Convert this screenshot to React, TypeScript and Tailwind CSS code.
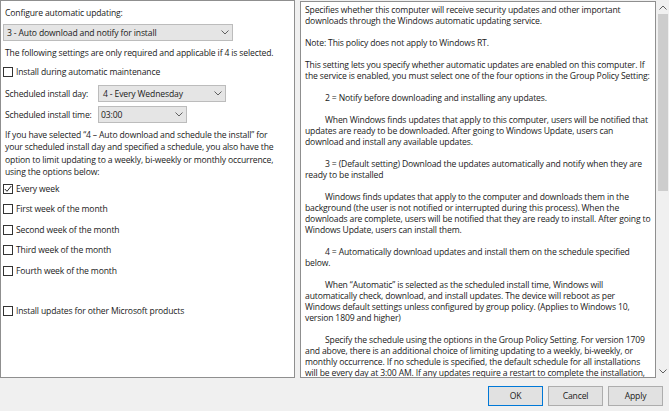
import React from "react";

const Chevron = ({ up = false }: { up?: boolean }) => (
  <svg width="8" height="5" viewBox="0 0 8 5" className="block">
    <polyline
      points={up ? "0.5,4.5 4,1 7.5,4.5" : "0.5,0.5 4,4 7.5,0.5"}
      fill="none"
      stroke="#606060"
      strokeWidth="1"
    />
  </svg>
);

const Box = ({ checked = false }: { checked?: boolean }) => (
  <div className="w-[10px] h-[10px] shrink-0 border border-[#333333] bg-white flex items-center justify-center">
    {checked && (
      <svg width="8" height="8" viewBox="0 0 8 8">
        <polyline points="0.8,4 3,6.3 7.3,1" fill="none" stroke="#222" strokeWidth="1" />
      </svg>
    )}
  </div>
);

const Check = ({ checked = false, label }: { checked?: boolean; label: string }) => (
  <div className="flex items-center h-[20.5px]">
    <Box checked={checked} />
    <span className="ml-[3px]">{label}</span>
  </div>
);

const Combo = ({ text, w, textPad, chevRight }: { text: string; w: string; textPad: string; chevRight: string }) => (
  <div className={`${w} h-[17px] bg-[#e5e5e5] border border-[#bcbcbc] flex items-center justify-between`}>
    <span className={textPad}>{text}</span>
    <span className={chevRight}>
      <Chevron />
    </span>
  </div>
);

const rightLines: { t: string; indent?: boolean }[] = [
  { t: "Specifies whether this computer will receive security updates and other important" },
  { t: "downloads through the Windows automatic updating service." },
  { t: "" },
  { t: "Note: This policy does not apply to Windows RT." },
  { t: "" },
  { t: "This setting lets you specify whether automatic updates are enabled on this computer. If" },
  { t: "the service is enabled, you must select one of the four options in the Group Policy Setting:" },
  { t: "" },
  { t: "2 = Notify before downloading and installing any updates.", indent: true },
  { t: "" },
  { t: "When Windows finds updates that apply to this computer, users will be notified that", indent: true },
  { t: "updates are ready to be downloaded. After going to Windows Update, users can" },
  { t: "download and install any available updates." },
  { t: "" },
  { t: "3 = (Default setting) Download the updates automatically and notify when they are", indent: true },
  { t: "ready to be installed" },
  { t: "" },
  { t: "Windows finds updates that apply to the computer and downloads them in the", indent: true },
  { t: "background (the user is not notified or interrupted during this process). When the" },
  { t: "downloads are complete, users will be notified that they are ready to install. After going to" },
  { t: "Windows Update, users can install them." },
  { t: "" },
  { t: "4 = Automatically download updates and install them on the schedule specified", indent: true },
  { t: "below." },
  { t: "" },
  { t: "When \u201CAutomatic\u201D is selected as the scheduled install time, Windows will", indent: true },
  { t: "automatically check, download, and install updates. The device will reboot as per" },
  { t: "Windows default settings unless configured by group policy. (Applies to Windows 10," },
  { t: "version 1809 and higher)" },
  { t: "" },
  { t: "Specify the schedule using the options in the Group Policy Setting. For version 1709", indent: true },
  { t: "and above, there is an additional choice of limiting updating to a weekly, bi-weekly, or" },
  { t: "monthly occurrence. If no schedule is specified, the default schedule for all installations" },
  { t: "will be every day at 3:00 AM. If any updates require a restart to complete the installation," },
];

export default function App() {
  return (
    <div className="w-[669px] h-[411px] bg-[#f0f0f0] overflow-hidden font-['Open_Sans','Noto_Sans',sans-serif] text-[8.6px] leading-[12px] text-[#1a1a1a] tracking-[-0.15px]">
      <div className="flex h-[378px]">
        {/* Left panel */}
        <div className="w-[295px] h-[378px] shrink-0 bg-white border border-[#8f8f8f] flex flex-col pl-[2px]">
          <div className="mt-[6px] pl-[2px] h-[12px]">Configure automatic updating:</div>
          <div className="mt-[5px]">
            <Combo text="3 - Auto download and notify for install" w="w-[230px]" textPad="pl-[3px]" chevRight="pr-[3px]" />
          </div>
          <div className="mt-[6px] h-[12px] pl-[2px]">The following settings are only required and applicable if 4 is selected.</div>
          <div className="mt-[7px] h-[12px] flex items-center">
            <Box />
            <span className="ml-[3px]">Install during automatic maintenance</span>
          </div>
          <div className="mt-[7px] flex items-center h-[17px]">
            <div className="w-[95px] pl-[2px]">Scheduled install day:</div>
            <Combo text="4 - Every Wednesday" w="w-[128px]" textPad="pl-[4px]" chevRight="pr-[3px]" />
          </div>
          <div className="mt-[4px] flex items-center h-[17px]">
            <div className="w-[95px] pl-[2px]">Scheduled install time:</div>
            <Combo text="03:00" w="w-[89px]" textPad="pl-[2px]" chevRight="pr-[3px]" />
          </div>
          <div className="mt-[6px] pl-[2px] leading-[12.3px]">
            <div>If you have selected &ldquo;4 &ndash; Auto download and schedule the install&rdquo; for</div>
            <div>your scheduled install day and specified a schedule, you also have the</div>
            <div>option to limit updating to a weekly, bi-weekly or monthly occurrence,</div>
            <div>using the options below:</div>
          </div>
          <div className="mt-[0.5px]">
            <Check checked label="Every week" />
            <Check label="First week of the month" />
            <Check label="Second week of the month" />
            <Check label="Third week of the month" />
            <Check label="Fourth week of the month" />
          </div>
          <div className="mt-[19.5px]">
            <Check label="Install updates for other Microsoft products" />
          </div>
        </div>

        {/* Right panel */}
        <div className="ml-[5px] flex h-[378px] pt-[1px]">
          <div className="w-[356px] h-[377px] bg-white border border-[#8f8f8f] overflow-hidden pl-[4px] pt-[3px] leading-[11px]">
            {rightLines.map((l, i) => (
              <div key={i} className={`h-[11px] whitespace-nowrap ${l.indent ? "pl-[20px]" : ""}`}>
                {l.t}
              </div>
            ))}
          </div>
          <div className="w-[14px] h-[377px] bg-[#f0f0f0] flex flex-col items-center">
            <div className="h-[13px] flex items-center justify-center">
              <Chevron up />
            </div>
            <div className="w-[10px] h-[177px] bg-[#cdcdcd]" />
            <div className="flex-1" />
            <div className="h-[14px] flex items-center justify-center">
              <Chevron />
            </div>
          </div>
        </div>
      </div>

      {/* Buttons */}
      <div className="flex justify-end gap-[5px] pr-[6px] mt-[8px]">
        <button className="w-[55px] h-[20px] bg-[#e1e1e1] border border-[#0078d7] text-[#1a1a1a]">OK</button>
        <button className="w-[55px] h-[20px] bg-[#e1e1e1] border border-[#adadad] text-[#1a1a1a]">Cancel</button>
        <button className="w-[55px] h-[20px] bg-[#e1e1e1] border border-[#adadad] text-[#1a1a1a]">Apply</button>
      </div>
    </div>
  );
}
